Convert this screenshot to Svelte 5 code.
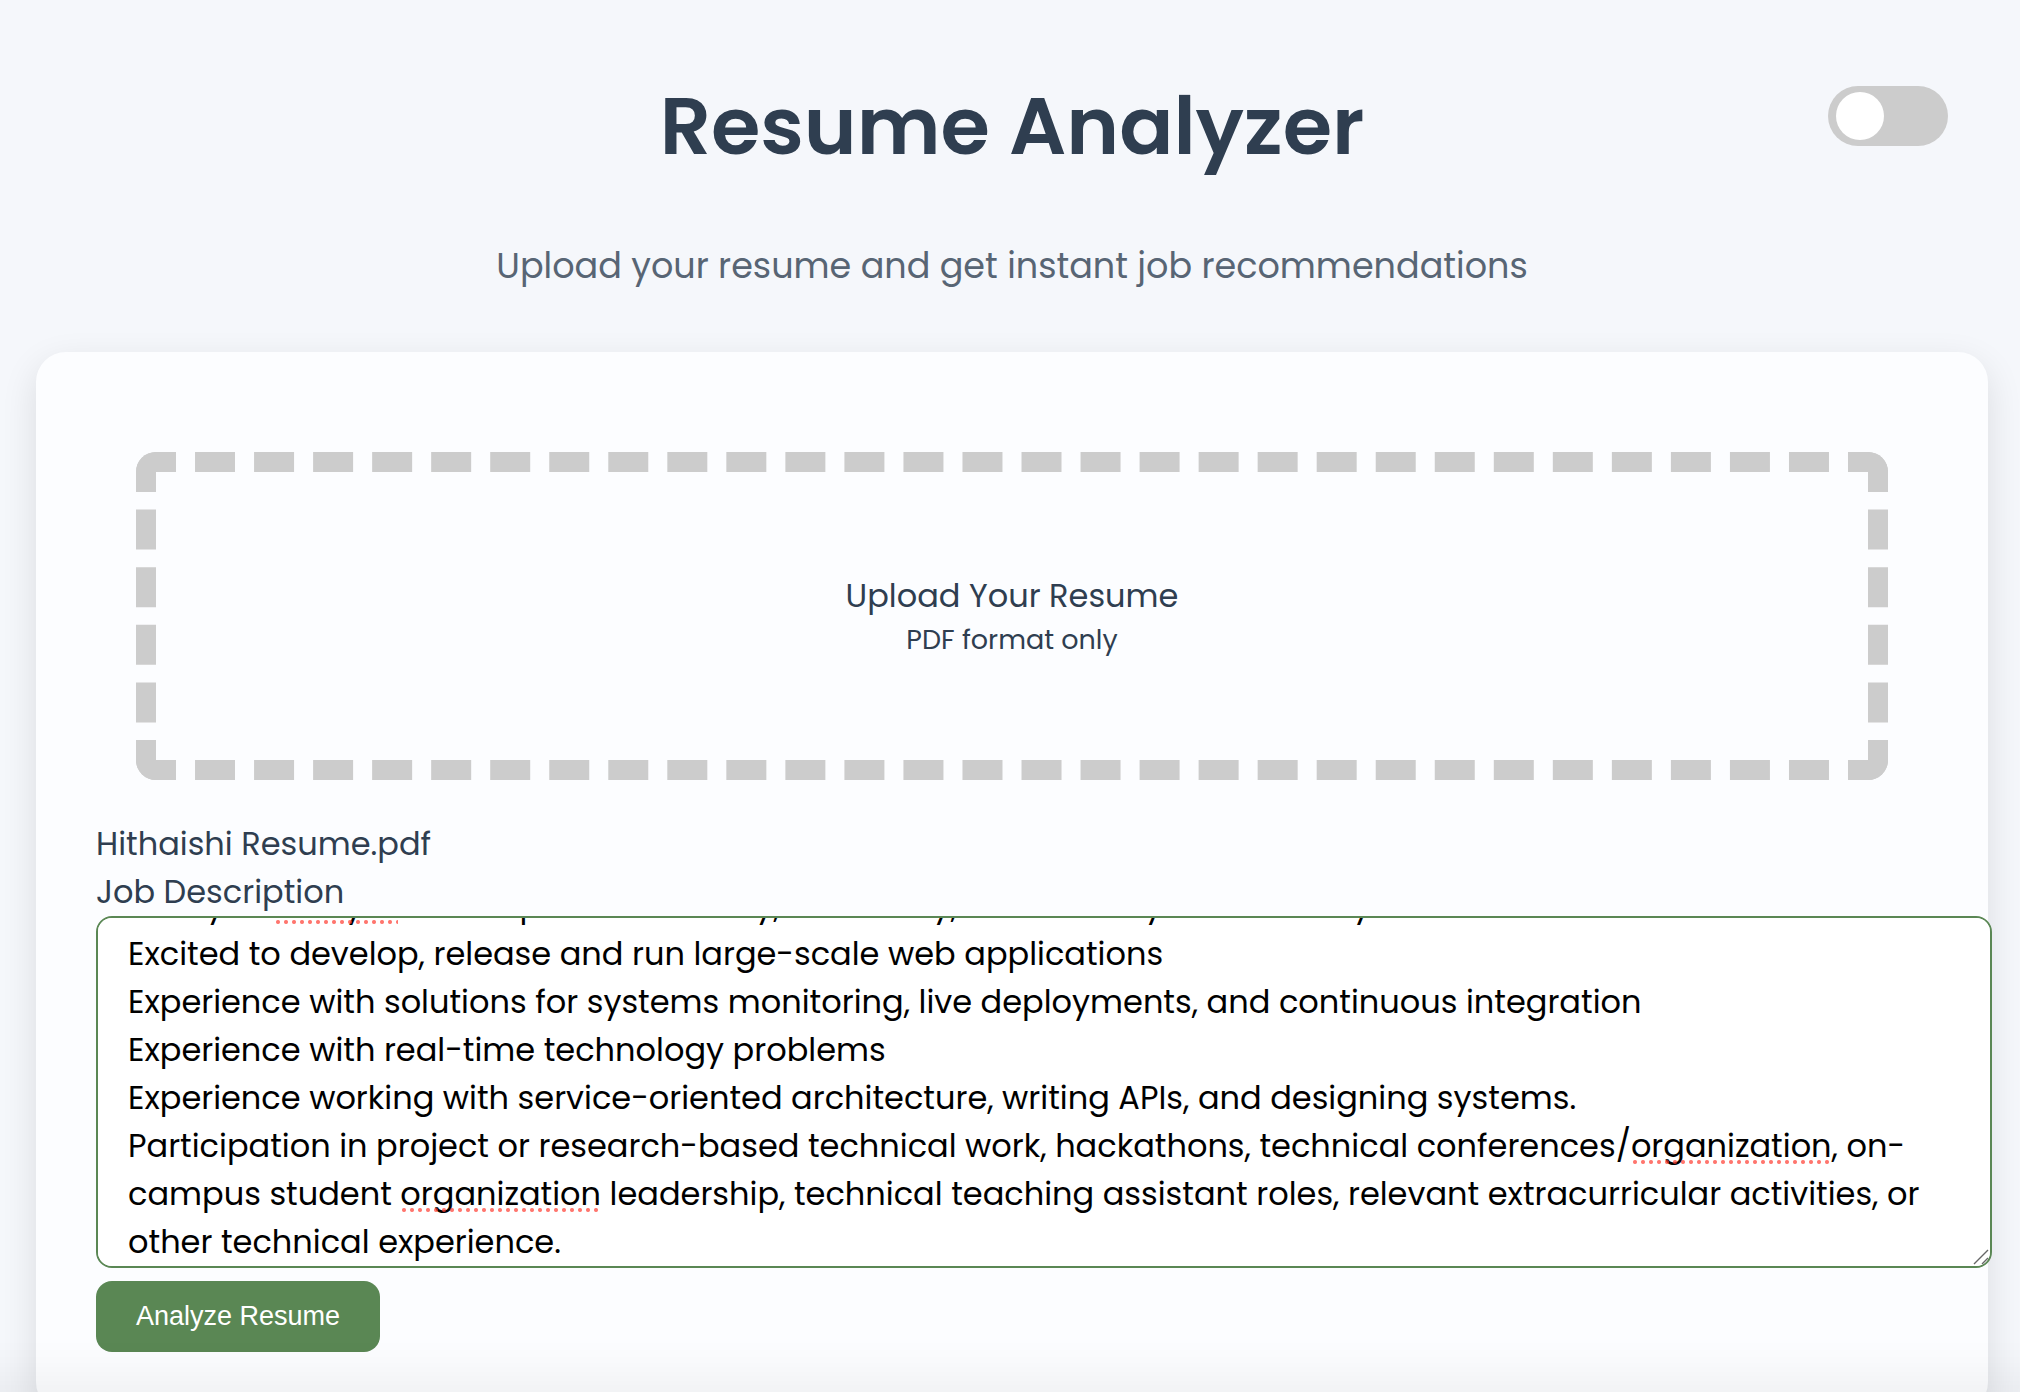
<script>
  import { onMount } from 'svelte';

  let dark = $state(false);
  let fileName = $state('Hithaishi Resume.pdf');
  let description = $state(
    [
      'Ability to analyze and improve efficiency, scalability, and stability of various system resources',
      'Excited to develop, release and run large-scale web applications',
      'Experience with solutions for systems monitoring, live deployments, and continuous integration',
      'Experience with real-time technology problems',
      'Experience working with service-oriented architecture, writing APIs, and designing systems.',
      'Participation in project or research-based technical work, hackathons, technical conferences/organization, on-campus student organization leadership, technical teaching assistant roles, relevant extracurricular activities, or other technical experience.'
    ].join('\n')
  );

  let marks = $state([]);
  let scrolled = $state(0);

  let field;
  let mirror;

  // The mirror wraps the text just as the field does; it is filled only while measuring.
  function measure(text) {
    mirror.textContent = text;
    const origin = mirror.getBoundingClientRect();
    const range = document.createRange();
    const found = [];
    for (const match of text.matchAll(/analyze|organization/g)) {
      range.setStart(mirror.firstChild, match.index);
      range.setEnd(mirror.firstChild, match.index + match[0].length);
      for (const box of range.getClientRects()) {
        found.push({
          left: box.left - origin.left,
          top: box.top - origin.top,
          width: box.width,
          height: box.height
        });
      }
    }
    mirror.textContent = '';
    marks = found;
  }

  $effect(() => measure(description));

  function pickFile(event) {
    const file = event.currentTarget.files[0];
    if (file) fileName = file.name;
  }

  // Show the end of the description, with its last line on the lower edge.
  onMount(() => {
    const below = parseInt(getComputedStyle(field).paddingBottom);
    field.scrollTop = field.scrollHeight - field.clientHeight - below;
    scrolled = field.scrollTop;
  });
</script>

<svelte:window onresize={() => measure(description)} />

<div class="page" class:dark>
  <header>
    <h1>Resume Analyzer</h1>
    <input class="switch" type="checkbox" role="switch" aria-label="Dark mode" bind:checked={dark} />
    <p>Upload your resume and get instant job recommendations</p>
  </header>

  <main>
    <label class="drop">
      <input class="file" type="file" accept="application/pdf" onchange={pickFile} />
      <span>Upload Your Resume</span>
      <small>PDF format only</small>
    </label>

    <div class="name">{fileName}</div>
    <label class="caption" for="description">Job Description</label>

    <div class="editor">
      <textarea
        id="description"
        class="text"
        spellcheck="false"
        bind:value={description}
        bind:this={field}
        onscroll={() => (scrolled = field.scrollTop)}
      ></textarea>
      <div class="text mirror" aria-hidden="true" bind:this={mirror}></div>
      <div class="marks" aria-hidden="true">
        {#each marks as mark}
          <i style="left: {mark.left - 2}px; top: {mark.top - 2 - scrolled}px; width: {mark.width}px; height: {mark.height}px"></i>
        {/each}
      </div>
      <svg class="grip" viewBox="0 0 16 16" aria-hidden="true">
        <path d="M1 15 15 1M9 15l6-6" />
      </svg>
    </div>

    <button type="button">Analyze Resume</button>
  </main>
  <div class="fade"></div>
</div>

<style>
  :global(body) {
    margin: 0;
  }

  .page {
    --ink: #2f3e50;
    --soft: #586574;
    --back: #f5f7fb;
    --card: #fcfdff;
    --green: #5a8754;
    box-sizing: border-box;
    height: 100vh;
    overflow-y: auto;
    scrollbar-width: none;
    padding: 66px 32px 36px 36px;
    background: var(--back);
    color: var(--ink);
    font-family: Poppins, Inter, 'Liberation Sans', sans-serif;
    font-size: 32px;
    line-height: 48px;
  }

  .page.dark {
    --ink: #e8edf3;
    --soft: #b4bfcb;
    --back: #1c232c;
    --card: #27303b;
  }

  header {
    display: grid;
    grid-template-columns: 1fr auto 1fr;
    row-gap: 53px;
    margin-bottom: 60px;
  }

  h1 {
    grid-column: 2;
    margin: 0;
    font-size: 80px;
    line-height: 120px;
    font-weight: 600;
  }

  header p {
    grid-column: 1 / -1;
    margin: 0;
    text-align: center;
    color: var(--soft);
    font-size: 35px;
    line-height: 53px;
  }

  .switch {
    appearance: none;
    box-sizing: border-box;
    justify-self: end;
    width: 120px;
    height: 60px;
    margin: 20px 40px 0 0;
    padding: 6px 8px;
    border-radius: 30px;
    background: #ccc;
    cursor: pointer;
  }

  .switch::before {
    content: '';
    display: block;
    width: 48px;
    height: 48px;
    border-radius: 50%;
    background: #fff;
  }

  .switch:checked {
    background: var(--green);
  }

  .switch:checked::before {
    margin-left: auto;
  }

  main {
    padding: 100px 60px 60px;
    border-radius: 30px;
    background: var(--card);
    box-shadow: 0 12px 36px rgba(0, 0, 0, 0.11);
  }

  .drop {
    display: flex;
    flex-direction: column;
    align-items: center;
    margin: 0 40px 40px;
    padding: 100px 40px;
    border: 20px dashed #ccc;
    border-radius: 20px;
    cursor: pointer;
  }

  .drop small {
    font-size: 27px;
    line-height: 40px;
  }

  .file {
    position: absolute;
    width: 1px;
    height: 1px;
    opacity: 0;
  }

  .caption {
    display: block;
  }

  .editor {
    position: relative;
    height: 352px;
    margin: 0 -64px 13px 0;
  }

  .text {
    box-sizing: border-box;
    display: block;
    width: 100%;
    height: 100%;
    margin: 0;
    padding: 30px;
    border: 2px solid var(--green);
    border-radius: 16px;
    font: inherit;
    overflow-y: auto;
    scrollbar-width: none;
    white-space: pre-wrap;
    overflow-wrap: break-word;
  }

  textarea {
    background: #fff;
    color: #000;
    resize: none;
    outline: none;
  }

  .mirror {
    position: absolute;
    inset: 0;
    visibility: hidden;
  }

  .marks {
    position: absolute;
    inset: 2px;
    overflow: hidden;
    pointer-events: none;
  }

  .marks i {
    position: absolute;
    background: radial-gradient(circle, rgba(255, 59, 48, 0.7) 1.5px, transparent 2.5px) 0 37px / 8px 4px repeat-x;
  }

  .grip {
    position: absolute;
    right: 3px;
    bottom: 3px;
    width: 16px;
    height: 16px;
    fill: none;
    stroke: #666;
    stroke-width: 1.4;
  }

  button {
    display: block;
    padding: 20px 40px;
    border: 0;
    border-radius: 16px;
    background: var(--green);
    color: #fff;
    font-family: Arial, 'Liberation Sans', sans-serif;
    font-size: 27px;
    line-height: 31px;
    cursor: pointer;
  }

  .fade {
    position: fixed;
    inset: auto 0 0 0;
    height: 52px;
    background: linear-gradient(transparent, rgba(0, 0, 0, 0.01) 40%, rgba(0, 0, 0, 0.04));
    pointer-events: none;
  }
</style>
